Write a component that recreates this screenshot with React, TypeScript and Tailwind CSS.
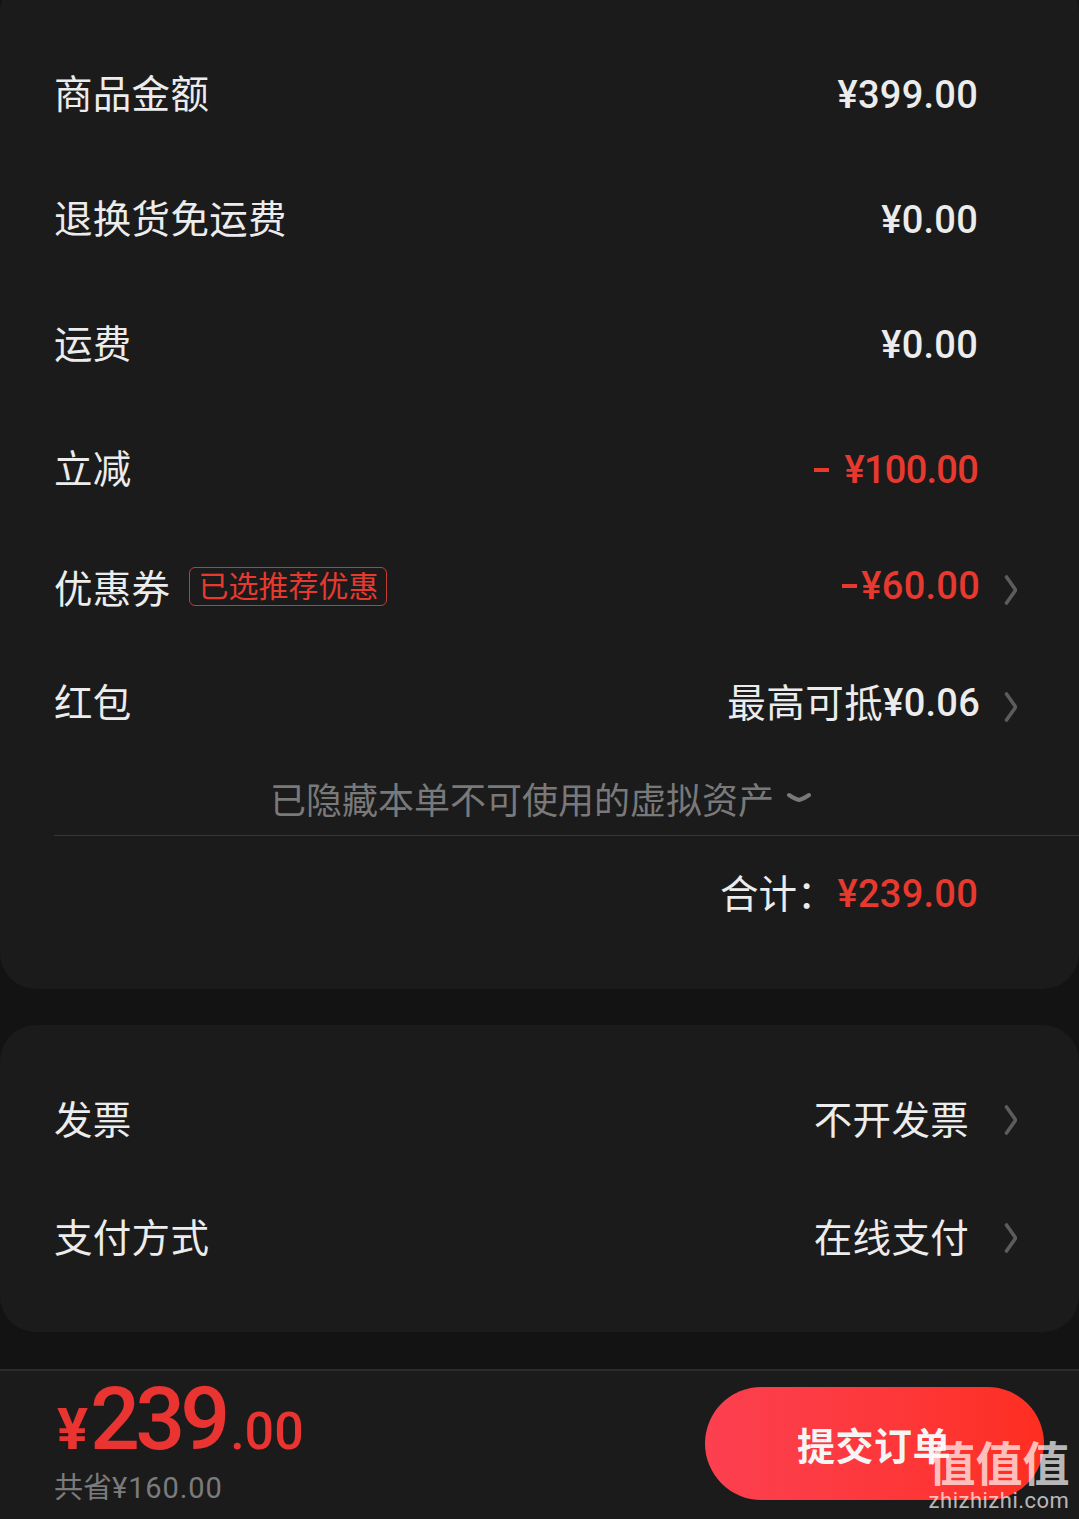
const cjk = "font-['Noto_Sans_CJK_SC','Noto_Sans',sans-serif]";
const num = "font-['Roboto'] text-[38px] leading-none font-medium tracking-[0.25px]";
const label = "pb-[6px] text-[38.5px] leading-none tracking-[0.3px] text-[#ececec]";

function Chevron({ low }: { low?: boolean }) {
  return (
    <svg width="14" height="30" viewBox="0 0 14 30" fill="none" className={`shrink-0 ${low ? "mt-[8px]" : ""}`}>
      <path d="M2.5 2 L11 14 Q11.6 15 11 16 L2.5 28" stroke="#5c5c5d" strokeWidth="3.6" strokeLinecap="round" />
    </svg>
  );
}

function Amount({ name, value }: { name: string; value: string }) {
  return (
    <div className="flex h-[125px] items-center justify-between pl-[54px] pr-[101px]">
      <span className={label}>{name}</span>
      <span className={`${num} text-[#ececec]`}>{value}</span>
    </div>
  );
}

export default function App() {
  return (
    <div className={`relative flex h-[1519px] w-[1079px] flex-col overflow-hidden bg-[#131313] ${cjk}`}>
      <section className="-mt-[24px] flex h-[1013px] shrink-0 flex-col rounded-[36px] bg-[#1b1b1c] pt-[56px]">
        <Amount name="商品金额" value="¥399.00" />
        <Amount name="退换货免运费" value="¥0.00" />
        <Amount name="运费" value="¥0.00" />
        <div className="flex h-[125px] items-center justify-between pl-[54px] pr-[101px]">
          <span className={label}>立减</span>
          <span className={`${num} flex items-center text-[#e8392f]`}>
            <span className="mr-[16px] h-[4px] w-[15px] bg-[#e8392f]" />
            <span className="tracking-[-0.75px]">¥100.00</span>
          </span>
        </div>
        <div className="flex h-[108px] items-center justify-between pl-[54px] pr-[61px]">
          <div className="flex items-center gap-[19px]">
            <span className="text-[38.5px] leading-none tracking-[0.3px] text-[#ececec]">优惠券</span>
            <span className="flex h-[39px] w-[198px] items-center justify-center rounded-[6px] border-[1.5px] border-[#c8392f] pb-[4px] text-[30px] leading-none text-[#e8392f]">
              已选推荐优惠
            </span>
          </div>
          <div className="flex items-center gap-[24px]">
            <span className={`${num} flex items-center text-[#e8392f]`}>
              <span className="mr-[4px] h-[4px] w-[15px] bg-[#e8392f]" />
              <span>¥60.00</span>
            </span>
            <Chevron low />
          </div>
        </div>
        <div className="flex h-[126px] items-center justify-between pl-[54px] pr-[61px]">
          <span className={label}>红包</span>
          <div className="flex items-center gap-[24px]">
            <span className="flex items-center text-[#ececec]">
              <span className="pb-[6px] text-[38.5px] leading-none tracking-[0.5px]">最高可抵</span>
              <span className={num}>¥0.06</span>
            </span>
            <Chevron low />
          </div>
        </div>
        <div className="ml-[54px] flex h-[70px] items-center border-b border-[#38383a] pl-[216px]">
          <span className="pb-[6px] text-[36px] leading-none text-[#79797a]">已隐藏本单不可使用的虚拟资产</span>
          <svg width="24" height="12" viewBox="0 0 24 12" fill="none" className="mb-[6px] ml-[13px]">
            <path d="M2 3 Q8 7 12 8 Q16 7 22 3" stroke="#79797a" strokeWidth="4" strokeLinecap="round" />
          </svg>
        </div>
        <div className="flex h-[116px] items-center justify-end pr-[101px]">
          <span className="pb-[6px] text-[38.5px] leading-none text-[#ececec]">合计：</span>
          <span className={`ml-[2px] ${num} text-[#e8392f]`}>¥239.00</span>
        </div>
      </section>

      <section className="mt-[36px] flex h-[307px] shrink-0 flex-col rounded-[36px] bg-[#1b1b1c] pt-[36px]">
        {[
          ["发票", "不开发票"],
          ["支付方式", "在线支付"],
        ].map(([name, value]) => (
          <div key={name} className="flex h-[118px] items-center justify-between pl-[54px] pr-[61px]">
            <span className={label}>{name}</span>
            <div className="flex items-center gap-[35px]">
              <span className={label}>{value}</span>
              <Chevron />
            </div>
          </div>
        ))}
      </section>

      <footer className="mt-[37px] flex flex-1 items-start justify-between border-t-2 border-[#2c2c2e] bg-[#1b1b1c] pl-[54px] pr-[35px]">
        <div className="flex flex-col pt-[4px]">
          <div className="flex h-[84px] items-baseline font-['Roboto'] font-medium text-[#ea3432]">
            <span className="ml-[3px] text-[58px] leading-none font-bold">¥</span>
            <span className="ml-[2px] text-[88px] leading-none tracking-[-5px]">239</span>
            <span className="ml-[5px] text-[52px] leading-none">.00</span>
          </div>
          <span className="mt-[12px] text-[29px] leading-none text-[#7b7b7c]">
            共省<span className="font-['Roboto'] tracking-[0.9px]">¥160.00</span>
          </span>
        </div>
        <button className="mt-[16px] flex h-[113px] w-[339px] items-center rounded-full bg-gradient-to-r from-[#fc4050] to-[#fe2e1f] pl-[92px] text-[38px] font-bold tracking-[0.5px] text-[#f5f5f5]">
          提交订单
        </button>
      </footer>

      <div className="pointer-events-none absolute top-[1433px] right-[9px] flex w-[142px] flex-col items-center text-[#ffffff]/70">
        <span className="text-[47px] leading-[56px] font-bold">值值值</span>
        <span className="font-['Roboto'] text-[22px] leading-[24px] tracking-[0.5px]">zhizhizhi.com</span>
      </div>
    </div>
  );
}
